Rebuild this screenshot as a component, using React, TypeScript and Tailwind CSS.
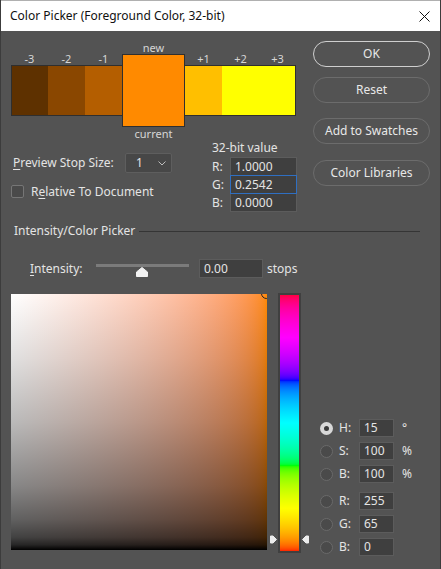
import React from "react";

const FONT = "font-['Noto_Sans',_'Liberation_Sans',_sans-serif]";

const leftSw = [
  { label: "-3", color: "bg-[#5e3100]" },
  { label: "-2", color: "bg-[#8a4700]" },
  { label: "-1", color: "bg-[#b45e00]" },
];
const rightSw = [
  { label: "+1", color: "bg-[#ffbf00]" },
  { label: "+2", color: "bg-[#ffff00]" },
  { label: "+3", color: "bg-[#ffff00]" },
];

function Swatch({ label, color, first, last }: { label: string; color: string; first?: boolean; last?: boolean }) {
  return (
    <div className="flex flex-col mt-[11px] w-[37px]">
      <div className="h-[13px] leading-[13px] text-[11px] text-center text-[#d6d6d6]">{label}</div>
      <div
        className={`h-[51px] ${color} border-y border-[#2f2f2f] ${first ? "border-l" : ""} ${last ? "border-r" : ""}`}
      />
    </div>
  );
}

function PillButton({ children, primary, className = "" }: { children: React.ReactNode; primary?: boolean; className?: string }) {
  return (
    <button
      className={`block h-[26px] w-[117px] rounded-full text-[12px] text-[#e8e8e8] ${
        primary ? "border-[1.5px] border-[#cfcfcf]" : "border border-[#6c6c6c]"
      } ${className}`}
    >
      {children}
    </button>
  );
}

function Radio({ on }: { on?: boolean }) {
  return on ? (
    <div className="w-[13px] h-[13px] rounded-full bg-[#d8d8d8] flex items-center justify-center">
      <div className="w-[5px] h-[5px] rounded-full bg-[#3a3a3a]" />
    </div>
  ) : (
    <div className="w-[13px] h-[13px] rounded-full bg-[#4a4a4a] border border-[#6a6a6a]" />
  );
}

function ValueRow({ label, value, unit, on }: { label: string; value: string; unit?: string; on?: boolean }) {
  return (
    <div className="flex items-center h-[18px]">
      <Radio on={on} />
      <span className="ml-[6px] w-[20px] text-[12px]">{label}</span>
      <div className="w-[35px] h-[18px] bg-[#3f3f3f] border border-[#5c5c5c] text-[12px] leading-[16px] pl-[4px]">
        {value}
      </div>
      {unit && <span className="ml-[8px] text-[12px]">{unit}</span>}
    </div>
  );
}

export default function App() {
  return (
    <div className={`w-[441px] h-[569px] flex flex-col bg-[#535353] text-[#e4e4e4] border-x border-[#3c3c3c] ${FONT}`}>
      {/* TITLE BAR */}
      <div className="h-[31px] bg-white flex items-center justify-between pl-[9px] pr-[10px] border-t border-[#b0b0b0]">
        <span className="text-[12px] text-[#111]">Color Picker (Foreground Color, 32-bit)</span>
        <svg width="11" height="11" viewBox="0 0 11 11">
          <path d="M0.5 0.5 L10.5 10.5 M10.5 0.5 L0.5 10.5" stroke="#111" strokeWidth="1" />
        </svg>
      </div>

      <div className="flex flex-col pl-[10px] pr-[10px] pt-[10px]">
        {/* TOP */}
        <div className="flex">
          <div className="flex flex-col w-[286px]">
            {/* SWATCHES */}
            <div className="flex items-start">
              {leftSw.map((s, i) => (
                <Swatch key={s.label} {...s} first={i === 0} />
              ))}
              <div className="flex flex-col w-[63px]">
                <div className="h-[13px] leading-[13px] text-[11px] text-center text-[#d6d6d6]">new</div>
                <div className="h-[73px] bg-[#ff8a00] border border-[#2f2f2f]" />
                <div className="h-[14px] leading-[14px] text-[11px] text-center text-[#d6d6d6]">current</div>
              </div>
              {rightSw.map((s, i) => (
                <Swatch key={s.label} {...s} last={i === 2} />
              ))}
            </div>

            <div className="flex">
              <div className="w-[201px] flex flex-col">
                <div className="flex items-center mt-[12px] h-[20px]">
                  <span className="ml-[2px] w-[112px] text-[12px]">
                    <u className="underline-offset-2">P</u>review Stop Size:
                  </span>
                  <div className="w-[47px] h-[20px] rounded-[2px] bg-[#474747] border border-[#5e5e5e] flex items-center justify-between pl-[10px] pr-[5px] text-[12px]">
                    <span>1</span>
                    <svg width="8" height="5" viewBox="0 0 8 5">
                      <path d="M0.5 0.5 L4 4 L7.5 0.5" fill="none" stroke="#bdbdbd" strokeWidth="1" />
                    </svg>
                  </div>
                </div>
                <div className="flex items-center mt-[12px] h-[13px]">
                  <div className="w-[13px] h-[13px] rounded-[2px] bg-[#4a4a4a] border border-[#767676]" />
                  <span className="ml-[7px] text-[12px]">
                    R<u className="underline-offset-2">e</u>lative To Document
                  </span>
                </div>
              </div>

              <div className="flex flex-col">
                <div className="h-[16px] leading-[14px] text-[12px]">32-bit value</div>
                {[
                  ["R:", "1.0000", false],
                  ["G:", "0.2542", true],
                  ["B:", "0.0000", false],
                ].map(([l, v, f], i) => (
                  <div key={String(l)} className={`flex items-center ${i > 0 ? "-mt-px" : ""}`}>
                    <span className="w-[18px] text-[12px]">{l as string}</span>
                    <div
                      className={`relative w-[67px] h-[19px] bg-[#3f3f3f] border text-[12px] leading-[17px] pl-[4px] ${
                        f ? "border-[#2f6fc2] z-10" : "border-[#5c5c5c]"
                      }`}
                    >
                      {v as string}
                    </div>
                  </div>
                ))}
              </div>
            </div>
          </div>

          {/* BUTTONS */}
          <div className="ml-[16px] flex flex-col">
            <PillButton primary>OK</PillButton>
            <PillButton className="mt-[10px]">Reset</PillButton>
            <PillButton className="mt-[15px]">Add to Swatches</PillButton>
            <PillButton className="mt-[16px]">Color Libraries</PillButton>
          </div>
        </div>

        {/* SECTION HEADER */}
        <div className="flex items-center mt-[12px] h-[14px]">
          <span className="ml-[3px] text-[12px]">Intensity/Color Picker</span>
          <div className="flex-1 ml-[4px] mr-[10px] h-px bg-[#353535]" />
        </div>

        {/* INTENSITY */}
        <div className="flex items-center mt-[21px] h-[19px]">
          <span className="ml-[19px] w-[66px] text-[12px]">
            <u className="underline-offset-2">I</u>ntensity:
          </span>
          <div className="relative w-[93px] h-[19px]">
            <div className="absolute left-0 right-0 top-[5px] h-[3px] bg-[#7b7b7b]" />
            <svg className="absolute left-[40px] top-[8px]" width="12" height="10" viewBox="0 0 12 10">
              <path d="M6 0.5 L11.5 5 L11.5 9.5 L0.5 9.5 L0.5 5 Z" fill="#f2f2f2" stroke="#f2f2f2" strokeLinejoin="round" />
            </svg>
          </div>
          <div className="ml-[10px] w-[64px] h-[19px] bg-[#3f3f3f] border border-[#5c5c5c] text-[12px] leading-[17px] pl-[4px]">
            0.00
          </div>
          <span className="ml-[4px] text-[12px]">stops</span>
        </div>

        {/* PICKER */}
        <div className="flex items-start mt-[15px]">
          <div className="relative mt-[1px] w-[256px] h-[256px] overflow-hidden bg-[image:linear-gradient(to_bottom,rgba(0,0,0,0)_0%,rgba(0,0,0,0.12)_25%,rgba(0,0,0,0.27)_50%,rgba(0,0,0,0.47)_75%,rgba(0,0,0,0.62)_88%,rgba(0,0,0,0.74)_95%,rgba(0,0,0,0.85)_98%,#000_100%),linear-gradient(in_srgb-linear_to_right,#ffffff,#ff8a00)]">
            <div className="absolute -right-[5px] -top-[6px] w-[11px] h-[11px] rounded-full border border-[#222]" />
          </div>

          <div className="relative ml-[11px]">
            <div className="w-[23px] h-[260px] border-2 border-[#404040] bg-[image:linear-gradient(in_srgb-linear_to_bottom,#ff0040,#ff00ff,#0000ff,#00ffff,#00ff00,#ffff00,#ff2000)]" />
            <svg className="absolute -left-[8px] top-[242px]" width="7" height="9" viewBox="0 0 7 9">
              <path d="M0.5 1 L3 1 L6.5 4.5 L3 8 L0.5 8 Z" fill="#ececec" stroke="#ececec" strokeLinejoin="round" />
            </svg>
            <svg className="absolute -right-[8px] top-[242px]" width="7" height="9" viewBox="0 0 7 9">
              <path d="M6.5 1 L4 1 L0.5 4.5 L4 8 L6.5 8 Z" fill="#ececec" stroke="#ececec" strokeLinejoin="round" />
            </svg>
          </div>

          <div className="ml-[19px] mt-[126px] flex flex-col gap-[5px]">
            <ValueRow on label="H:" value="15" unit="°" />
            <ValueRow label="S:" value="100" unit="%" />
            <ValueRow label="B:" value="100" unit="%" />
            <div className="mt-[4px]">
              <ValueRow label="R:" value="255" />
            </div>
            <ValueRow label="G:" value="65" />
            <ValueRow label="B:" value="0" />
          </div>
        </div>
      </div>
    </div>
  );
}
